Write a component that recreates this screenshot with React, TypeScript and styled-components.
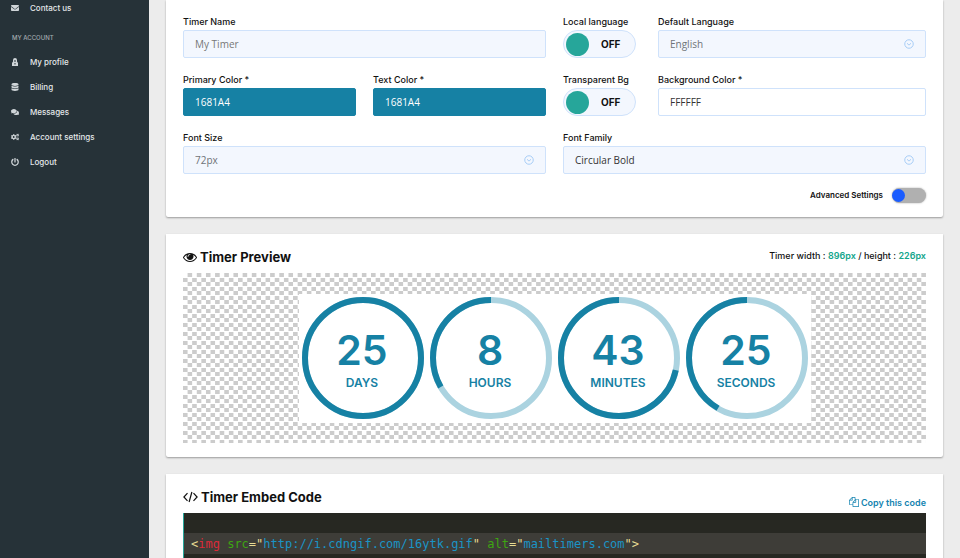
import React from "react";
import styled, { createGlobalStyle, css } from "styled-components";
import { FaCogs, FaComments, FaDatabase, FaEnvelope, FaPowerOff } from "react-icons/fa";

const GlobalStyle = createGlobalStyle`
  *, *::before, *::after { box-sizing: border-box; }
  body { margin: 0; background: #ececec; font-family: Inter, sans-serif; color: #111; }
  button, input, select { font: inherit; margin: 0; }
`;

const Shell = styled.div`
  display: flex;
  height: 100vh;
  overflow: hidden;
`;

const Sidebar = styled.nav`
  flex: 0 0 149px;
  background: #263238;
  overflow: hidden;
`;

const NavSection = styled.h2`
  margin: 0;
  padding: 12px 12px 0;
  height: 29px;
  font-size: 6px;
  line-height: 12px;
  font-weight: 500;
  color: #a3abaf;
`;

const NavLink = styled.a`
  display: flex;
  align-items: center;
  height: 25px;
  padding-left: 11px;
  color: #e4e8ea;
  font-size: 8px;
  font-weight: 500;
  text-decoration: none;

  &:first-child { height: 20px; padding-bottom: 4px; }
  svg { width: 8px; height: 8px; margin-right: 11px; color: #cfd5d8; }
`;

const Main = styled.main`
  flex: 1;
  min-width: 0;
  padding: 0 17px 17px;
  display: flex;
  flex-direction: column;
  gap: 17px;
  overflow-y: auto;
  scrollbar-width: none;
`;

const Card = styled.section`
  flex: none;
  padding: 12px 17px 14px;
  background: #fff;
  border-radius: 0 0 2px 2px;
  box-shadow: 0 1px 2px rgba(0, 0, 0, 0.35);
`;

const FormGrid = styled.div`
  display: grid;
  grid-template-columns: repeat(8, minmax(0, 1fr));
  gap: 12px 17px;
`;

const Field = styled.div<{ $span: number }>`
  grid-column: span ${(p) => p.$span};
  min-width: 0;
`;

const FieldLabel = styled.label`
  display: block;
  height: 18px;
  font-size: 9px;
  line-height: 20px;
  font-weight: 500;
  white-space: nowrap;
`;

type Tone = "soft" | "plain" | "brand";

const tones = {
  soft: css`background: #f3f7fe; border-color: #cfe2fb; color: #6f7478;`,
  plain: css`background: #fff; border-color: #cfe2fb; color: #333;`,
  brand: css`background: #1681a4; border-color: #1681a4; color: #fff;`,
};

const controlBox = css`
  display: block;
  width: 100%;
  height: 28px;
  padding: 0 11px;
  border: 1px solid;
  border-radius: 2px;
  outline: none;
  font-family: "Open Sans", "Noto Sans", sans-serif;
  font-size: 10px;
`;

const TextBox = styled.input<{ $tone: Tone }>`
  ${controlBox}
  ${(p) => tones[p.$tone]}
  &::placeholder { color: #777; opacity: 1; }
`;

const SelectWrap = styled.div`
  display: grid;
  align-items: center;

  > * { grid-area: 1 / 1; }
  svg { justify-self: end; margin-right: 12px; pointer-events: none; }
`;

const SelectBox = styled.select<{ $strong?: boolean }>`
  ${controlBox}
  ${tones.soft}
  appearance: none;
  opacity: 1;
  ${(p) => p.$strong && css`color: #333;`}
`;

const PillSwitch = styled.div`
  display: flex;
  align-items: center;
  width: 73px;
  height: 28px;
  padding-left: 2px;
  border: 1px solid #cfe2fb;
  border-radius: 14px;
  background: #f3f7fe;
  font-size: 10px;
  font-weight: 700;
`;

const PillKnob = styled.input`
  appearance: none;
  width: 23px;
  height: 23px;
  border-radius: 50%;
  background: #26a69a;
`;

const PillText = styled.span`
  margin-left: 12px;
`;

const Advanced = styled.div`
  display: flex;
  align-items: center;
  justify-content: flex-end;
  gap: 9px;
  margin-top: 13px;
  height: 16px;
  font-size: 8px;
  font-weight: 600;
`;

const SlideSwitch = styled.input`
  appearance: none;
  display: flex;
  align-items: center;
  width: 34px;
  height: 15px;
  border-radius: 8px;
  background: #b0b0b0;
  box-shadow: 0 0 2px rgba(0, 0, 0, 0.35);

  &::before {
    content: "";
    width: 13px;
    height: 13px;
    border-radius: 50%;
    background: #1a5cff;
  }
`;

const CardHeader = styled.header`
  display: flex;
  justify-content: space-between;
  height: 27px;
`;

const CardTitle = styled.h1`
  display: flex;
  align-items: center;
  gap: 3px;
  height: 22px;
  margin: 0;
  font-size: 13px;
  font-weight: 700;
`;

const Dimensions = styled.p`
  margin: 0;
  font-size: 9px;
  line-height: 19px;
  font-weight: 500;
  b { color: #14a58c; font-weight: 600; }
`;

const Stage = styled.div`
  display: flex;
  align-items: center;
  justify-content: center;
  height: 170px;
  background: conic-gradient(#ccc 25%, #fff 0 50%, #ccc 0 75%, #fff 0) 0 0 / calc(100% / 81) 9px;
`;

const TimerBox = styled.div`
  display: grid;
  grid-template-columns: repeat(4, 128px);
  height: 129px;
  background: #fff;
`;

const Dial = styled.svg`
  width: 128px;
  height: 129px;
  font-family: Inter, sans-serif;
  font-weight: 600;
  text-anchor: middle;
  fill: #1681a4;
`;

const CopyButton = styled.button`
  display: flex;
  align-items: center;
  align-self: flex-end;
  gap: 2px;
  height: 22px;
  padding: 0;
  border: 0;
  background: none;
  color: #1383b0;
  font-size: 9px;
  font-weight: 600;
`;

const CodeBlock = styled.pre`
  margin: 0;
  padding: 20px 0;
  background: #272822;
  border-left: 1px solid #26a69a;
  color: #e6db93;
  font-family: "DejaVu Sans Mono", monospace;
  font-size: 12px;
  line-height: 20px;
`;

const CodeLine = styled.code`
  display: block;
  padding: 1px 0 0 7px;
  background: #3e3d38;
  font-family: inherit;
`;

const Token = styled.span<{ $kind: "tag" | "attr" | "value" }>`
  color: ${(p) => ({ tag: "#dc2a38", attr: "#3da512", value: "#1a94c6" })[p.$kind]};
`;

const ProfileIcon = () => (
  <svg viewBox="0 0 16 16" fill="currentColor" aria-hidden="true">
    <path fillRule="evenodd" d="M8 0a4 4 0 0 1 4 4v3l2 3v6H2v-6l2-3V4a4 4 0 0 1 4-4Zm-2 5v2h4V5H6Zm1 5v3h2v-3H7Z" />
  </svg>
);

const EyeIcon = () => (
  <svg width="14" height="14" viewBox="0 0 1792 1792" fill="currentColor" aria-hidden="true">
    <path d="M1664 960q-152-236-381-353 61 104 61 225 0 185-131.500 316.500t-316.500 131.500-316.500-131.500-131.500-316.500q0-121 61-225-229 117-381 353 133 205 333.500 326.500t434.500 121.500 434.500-121.500 333.500-326.500zM944 576q0-20-14-34t-34-14q-125 0-214.500 89.500t-89.500 214.500q0 20 14 34t34 14 34-14 14-34q0-86 61-147t147-61q20 0 34-14t14-34zM1792 960q0 34-20 69-140 230-376.500 368.500t-499.500 138.500-499.500-139-376.500-368q-20-35-20-69t20-69q140-229 376.500-368t499.500-139 499.500 139 376.500 368q20 35 20 69z" />
  </svg>
);

const CodeIcon = () => (
  <svg width="15" height="12" viewBox="0 0 15 12" fill="none" stroke="currentColor" strokeWidth="1.2" aria-hidden="true">
    <path d="M4.500 2.200.9 6l3.600 3.800M10.500 2.200 14.100 6l-3.600 3.800M8.900 1 6.100 11" />
  </svg>
);

const CopyIcon = () => (
  <svg width="10" height="10" viewBox="0 0 1792 1792" fill="currentColor" aria-hidden="true">
    <path d="M1696 384q40 0 68 28t28 68v1216q0 40-28 68t-68 28h-960q-40 0-68-28t-28-68v-288h-544q-40 0-68-28t-28-68v-672q0-40 20-88t48-76l408-408q28-28 76-48t88-20h416q40 0 68 28t28 68v328q68-40 128-40h416zM1152 597l-299 299h299v-299zM512 213l-299 299h299v-299zM708 860l316-316v-416h-384v416q0 40-28 68t-68 28h-416v640h512v-256q0-40 20-88t48-76zM1664 1664v-1152h-384v416q0 40-28 68t-68 28h-416v640h896z" />
  </svg>
);

const ChevronIcon = () => (
  <svg width="10" height="10" viewBox="0 0 20 20" fill="none" stroke="#9fc8f5" strokeWidth="1.800" aria-hidden="true">
    <circle cx="10" cy="10" r="8.500" />
    <path d="m6 8.500 4 3.800 4-3.800" />
  </svg>
);

const accountLinks = [
  { label: "My profile", icon: <ProfileIcon /> },
  { label: "Billing", icon: <FaDatabase /> },
  { label: "Messages", icon: <FaComments /> },
  { label: "Account settings", icon: <FaCogs /> },
  { label: "Logout", icon: <FaPowerOff /> },
];

const units = [
  { label: "DAYS", value: 25, share: 1 },
  { label: "HOURS", value: 8, share: 8 / 24 },
  { label: "MINUTES", value: 43, share: 43 / 60 },
  { label: "SECONDS", value: 25, share: 25 / 60 },
];

function SelectField({ id, label, span, value, strong }: { id: string; label: string; span: number; value: string; strong?: boolean }) {
  return (
    <Field $span={span}>
      <FieldLabel htmlFor={id}>{label}</FieldLabel>
      <SelectWrap>
        <SelectBox id={id} $strong={strong}>
          <option>{value}</option>
        </SelectBox>
        <ChevronIcon />
      </SelectWrap>
    </Field>
  );
}

function TextField({ id, label, span, tone, value, placeholder }: { id: string; label: string; span: number; tone: Tone; value?: string; placeholder?: string }) {
  return (
    <Field $span={span}>
      <FieldLabel htmlFor={id}>{label}</FieldLabel>
      <TextBox id={id} $tone={tone} defaultValue={value} placeholder={placeholder} />
    </Field>
  );
}

function SwitchField({ id, label }: { id: string; label: string }) {
  return (
    <Field $span={1}>
      <FieldLabel htmlFor={id}>{label}</FieldLabel>
      <PillSwitch>
        <PillKnob id={id} type="checkbox" />
        <PillText>OFF</PillText>
      </PillSwitch>
    </Field>
  );
}

function UnitDial({ label, value, share }: { label: string; value: number; share: number }) {
  return (
    <Dial viewBox="0 0 128 129">
      <circle cx="64" cy="64" r="58" fill="none" stroke="#abd3e0" strokeWidth="6" />
      <circle
        cx="64"
        cy="64"
        r="58"
        fill="none"
        stroke="#1681a4"
        strokeWidth="6"
        pathLength={360}
        strokeDasharray={`${share * 360} 360`}
        transform="translate(128 0) scale(-1 1) rotate(-90 64 64)"
      />
      <text x="63" y="71" fontSize="41">{value}</text>
      <text x="63" y="93" fontSize="12">{label}</text>
    </Dial>
  );
}

export default function App() {
  return (
    <>
      <GlobalStyle />
      <Shell>
        <Sidebar>
          <NavLink href="#contact"><FaEnvelope />Contact us</NavLink>
          <NavSection>MY ACCOUNT</NavSection>
          {accountLinks.map((link) => (
            <NavLink key={link.label} href="#account">{link.icon}{link.label}</NavLink>
          ))}
        </Sidebar>
        <Main>
          <Card>
            <FormGrid>
              <TextField id="name" label="Timer Name" span={4} tone="soft" placeholder="My Timer" />
              <SwitchField id="local" label="Local language" />
              <SelectField id="language" label="Default Language" span={3} value="English" />
              <TextField id="primary" label="Primary Color *" span={2} tone="brand" value="1681A4" />
              <TextField id="text" label="Text Color *" span={2} tone="brand" value="1681A4" />
              <SwitchField id="transparent" label="Transparent Bg" />
              <TextField id="background" label="Background Color *" span={3} tone="plain" value="FFFFFF" />
              <SelectField id="size" label="Font Size" span={4} value="72px" />
              <SelectField id="family" label="Font Family" span={4} value="Circular Bold" strong />
            </FormGrid>
            <Advanced>
              <label htmlFor="advanced">Advanced Settings</label>
              <SlideSwitch id="advanced" type="checkbox" />
            </Advanced>
          </Card>
          <Card>
            <CardHeader>
              <CardTitle><EyeIcon />Timer Preview</CardTitle>
              <Dimensions>Timer width : <b>896px</b> / height : <b>226px</b></Dimensions>
            </CardHeader>
            <Stage>
              <TimerBox>
                {units.map((unit) => <UnitDial key={unit.label} {...unit} />)}
              </TimerBox>
            </Stage>
          </Card>
          <Card>
            <CardHeader>
              <CardTitle><CodeIcon />Timer Embed Code</CardTitle>
              <CopyButton type="button"><CopyIcon />Copy this code</CopyButton>
            </CardHeader>
            <CodeBlock>
              <CodeLine>
                {"<"}<Token $kind="tag">img</Token> <Token $kind="attr">src</Token>{'="'}
                <Token $kind="value">http://i.cdngif.com/16ytk.gif</Token>{'" '}
                <Token $kind="attr">alt</Token>{'="'}<Token $kind="value">mailtimers.com</Token>{'">'}
              </CodeLine>
            </CodeBlock>
          </Card>
        </Main>
      </Shell>
    </>
  );
}
